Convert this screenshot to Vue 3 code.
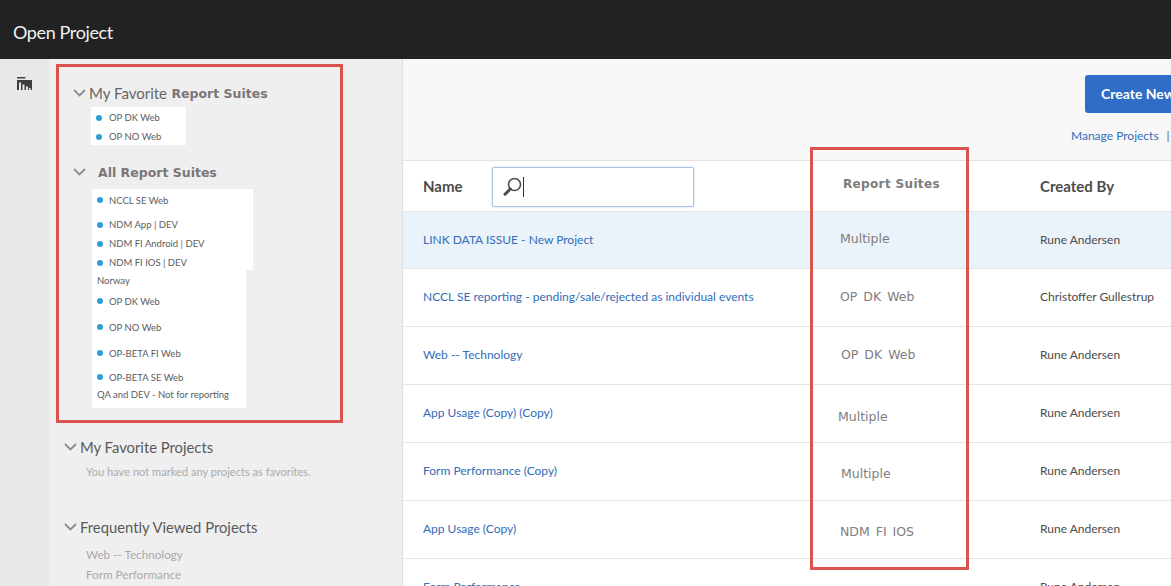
<script setup>
const favorites = ['OP DK Web', 'OP NO Web']
const allSuites = [
  { label: 'NCCL SE Web', h: 22, gap: 0, dot: true },
  { label: 'NDM App | DEV', h: 19, gap: 4, dot: true },
  { label: 'NDM FI Android | DEV', h: 19, gap: 0, dot: true },
  { label: 'NDM FI IOS | DEV', h: 19, gap: 0, dot: true },
  { label: 'Norway', h: 16, gap: 0, dot: false },
  { label: 'OP DK Web', h: 26, gap: 0, dot: true },
  { label: 'OP NO Web', h: 26, gap: 0, dot: true },
  { label: 'OP-BETA FI Web', h: 26, gap: 0, dot: true },
  { label: 'OP-BETA SE Web', h: 22, gap: 0, dot: true },
  { label: 'QA and DEV - Not for reporting', h: 12, gap: 0, dot: false }
]
const rows = [
  { name: 'LINK DATA ISSUE - New Project', suite: 'Multiple', by: 'Rune Andersen', dx: 0, dy: -2, active: true },
  { name: 'NCCL SE reporting - pending/sale/rejected as individual events', suite: 'OP DK Web', by: 'Christoffer Gullestrup', dx: 0, dy: -1 },
  { name: 'Web -- Technology', suite: 'OP DK Web', by: 'Rune Andersen', dx: 1, dy: -1 },
  { name: 'App Usage (Copy) (Copy)', suite: 'Multiple', by: 'Rune Andersen', dx: -2, dy: 3 },
  { name: 'Form Performance (Copy)', suite: 'Multiple', by: 'Rune Andersen', dx: 1, dy: 2 },
  { name: 'App Usage (Copy)', suite: 'NDM FI IOS', by: 'Rune Andersen', dx: 0, dy: 2 },
  { name: 'Form Performance', suite: '', by: 'Rune Andersen', dx: 0, dy: 0 }
]
</script>

<template>
  <div class="page">
    <header class="topbar">Open Project</header>
    <div class="body">
      <nav class="rail">
        <svg class="rail-icon" width="15" height="13" viewBox="0 0 15 13">
          <rect x="0" y="0" width="8.5" height="1.5" fill="#444" />
          <rect x="0" y="3" width="15" height="10" fill="#3d3d3d" />
          <rect x="2" y="5.5" width="2" height="7.5" fill="#e8e8e8" />
          <rect x="5.5" y="7.5" width="2" height="5.5" fill="#e8e8e8" />
          <rect x="9" y="9.5" width="2" height="3.5" fill="#e8e8e8" />
          <rect x="12" y="11" width="1.6" height="2" fill="#e8e8e8" />
        </svg>
      </nav>
      <aside class="side">
        <section class="suites">
          <h3 class="suite-head">
            <svg class="chev" width="13" height="8" viewBox="0 0 13 8"><path d="M1 1l5.5 5.5L12 1" fill="none" stroke="#8c8c8c" stroke-width="1.8" /></svg>
            <span class="adobe">My Favorite</span>&nbsp;<span>Report Suites</span>
          </h3>
          <ul class="patch fav">
            <li v-for="f in favorites" :key="f" class="item fav-item"><i class="dot"></i>{{ f }}</li>
          </ul>
          <h3 class="suite-head all">
            <svg class="chev" width="13" height="8" viewBox="0 0 13 8"><path d="M1 1l5.5 5.5L12 1" fill="none" stroke="#8c8c8c" stroke-width="1.8" /></svg>
            <span class="all-label">All Report Suites</span>
          </h3>
          <ul class="patch all-list">
            <li v-for="s in allSuites" :key="s.label" class="item" :style="{ height: s.h + 'px', marginTop: s.gap + 'px' }">
              <i v-if="s.dot" class="dot"></i>
              <span>{{ s.label }}</span>
            </li>
          </ul>
        </section>

        <section class="proj first">
          <h3 class="proj-head">
            <svg class="chev" width="13" height="8" viewBox="0 0 13 8"><path d="M1 1l5.5 5.5L12 1" fill="none" stroke="#8c8c8c" stroke-width="1.8" /></svg>
            My Favorite Projects
          </h3>
          <p class="empty">You have not marked any projects as favorites.</p>
        </section>
        <section class="proj second">
          <h3 class="proj-head">
            <svg class="chev" width="13" height="8" viewBox="0 0 13 8"><path d="M1 1l5.5 5.5L12 1" fill="none" stroke="#8c8c8c" stroke-width="1.8" /></svg>
            Frequently Viewed Projects
          </h3>
          <p class="recent">Web -- Technology</p>
          <p class="recent">Form Performance</p>
        </section>
      </aside>

      <main class="main">
        <div class="toolbar">
          <button class="create"><span>Create New</span></button>
          <div class="tool-links"><a>Manage Projects</a><span class="sep">|</span></div>
        </div>
        <div class="row head">
          <div class="c-name name-head">
            <strong>Name</strong>
            <div class="search">
              <svg width="20" height="19" viewBox="0 0 20 19">
                <circle cx="11.5" cy="7.5" r="6" fill="none" stroke="#4a4a4a" stroke-width="1.6" />
                <path d="M7.3 12L2 17.2" stroke="#4a4a4a" stroke-width="3" stroke-linecap="round" />
              </svg>
              <i class="caret"></i>
            </div>
          </div>
          <div class="c-suite suite-title">Report Suites</div>
          <div class="c-by by-title">Created By</div>
        </div>
        <div v-for="r in rows" :key="r.name" class="row body-row" :class="{ active: r.active }">
          <a class="c-name link">{{ r.name }}</a>
          <div class="c-suite">
            <span class="suite-val" :style="{ transform: `translate(${r.dx}px, ${r.dy}px)` }">{{ r.suite }}</span>
          </div>
          <div class="c-by">{{ r.by }}</div>
        </div>
      </main>
    </div>
    <div class="mark mark-left"></div>
    <div class="mark mark-right"></div>
  </div>
</template>

<style scoped>
* { box-sizing: border-box; }
.page {
  position: relative;
  width: 1171px;
  height: 586px;
  overflow: hidden;
  font-family: "Lato", "Noto Sans", sans-serif;
  color: #4b4b4b;
  background: #fff;
}
.topbar {
  height: 59px;
  background: #222;
  color: #f0f0f0;
  font-size: 18px;
  padding-left: 13px;
  line-height: 64px;
  letter-spacing: -0.38px;
}
.body { display: flex; height: 527px; }
.rail { width: 49px; flex: none; background: #e8e8e8; padding: 18px 0 0 17px; }
.rail-icon { display: block; }
.side {
  width: 353px;
  flex: none;
  background: #efefef;
  padding: 25px 0 0 24px;
  overflow: hidden;
}
.suite-head {
  margin: 0;
  height: 18px;
  display: flex;
  align-items: center;
  font-size: 12.5px;
  font-weight: 700;
  color: #7a7678;
  font-family: "DejaVu Sans", sans-serif;
  white-space: nowrap;
}
.adobe { font-family: "Lato", sans-serif; font-size: 15px; font-weight: 400; color: #666; }
.chev { flex: none; margin-right: 3px; }
.all { margin-top: 18px; }
.all-label { margin-left: 9px; }
.patch { list-style: none; margin: 0; padding: 0; background: #fff; }
.fav { width: 95px; height: 38px; margin: 5px 0 0 18px; padding-top: 1px; }
.fav-item { height: 19px; }
.fav-item .dot { margin-right: 7px; }
.all-list {
  width: 154px;
  margin: 8px 0 0 19px;
  position: relative;
  padding-bottom: 8px;
}
.all-list::before {
  content: "";
  position: absolute;
  left: 154px;
  top: 0;
  width: 7px;
  height: 81px;
  background: #fff;
}
.item {
  display: flex;
  align-items: center;
  padding-left: 5px;
  font-size: 9.5px;
  color: #5c5c5c;
  white-space: nowrap;
}
.dot {
  width: 6px;
  height: 6px;
  border-radius: 50%;
  background: #2a9fd8;
  margin-right: 6px;
  flex: none;
}
.proj-head {
  margin: 0;
  font-size: 14.8px;
  font-weight: 400;
  color: #5a5a5a;
  display: flex;
  align-items: center;
  height: 18px;
  white-space: nowrap;
}
.proj { margin-left: -9px; }
.first { margin-top: 30px; height: 80px; }
.empty { margin: 9px 0 0 22px; font-size: 11.1px; color: #ababab; white-space: nowrap; }
.recent { margin: 0 0 0 22px; font-size: 11.7px; line-height: 20px; color: #a9a9a9; white-space: nowrap; }
.second .proj-head { margin-bottom: 8px; }
.main { flex: 1; min-width: 0; background: #fff; border-left: 1px solid #dfdfdf; }
.toolbar {
  height: 102px;
  width: 768px;
  background: #f8f8f9;
  border-bottom: 1px solid #e2e2e2;
  display: flex;
  flex-direction: column;
  align-items: flex-start;
  padding: 16px 0 0 668px;
  overflow: hidden;
}
.create {
  width: 150px;
  flex: none;
  height: 38px;
  margin-left: 14px;
  border: 0;
  border-radius: 3px;
  background: #2f6dc6;
  color: #fff;
  font: 700 14px "Lato", sans-serif;
  text-align: left;
  padding: 0 0 2px 16px;
}
.tool-links { margin-top: 15px; white-space: nowrap; font-size: 12px; color: #326db8; display: flex; }
.sep { margin-left: 8px; color: #555; }
.row {
  display: grid;
  grid-template-columns: 437px 200px 300px;
  height: 58px;
  align-items: center;
  border-bottom: 1px solid #e4e4e4;
  font-size: 12px;
  width: 940px;
}
.row.head { height: 51px; border-bottom: 1px solid #dfe5ea; }
.row.active { background: #ebf3fa; height: 57px; }
.body-row .c-name, .body-row .c-by { padding-bottom: 2px; }
.c-name { padding-left: 20px; }
.name-head { display: flex; align-items: center; gap: 29px; }
.name-head strong { font-size: 15px; color: #4a4a4a; }
.search {
  width: 202px;
  height: 40px;
  margin-top: 1px;
  display: flex;
  align-items: center;
  padding-left: 10px;
  background: #fff;
  border: 1px solid #a9c6e6;
  border-radius: 2px;
  box-shadow: 0 0 2px rgba(120, 165, 215, .5);
}
.caret { width: 1px; height: 20px; background: #333; }
.link { color: #326db8; white-space: nowrap; }
.c-suite { display: flex; }
.suite-title {
  font: 700 12px "DejaVu Sans", sans-serif;
  color: #7c7c7c;
  padding-left: 3px;
  margin-top: -5px;
  letter-spacing: .35px;
}
.by-title { font-size: 15px; font-weight: 700; color: #4a4a4a; }
.suite-val { font: 12.5px "DejaVu Sans", sans-serif; color: #817c80; word-spacing: 2px; white-space: nowrap; }
.c-by { color: #4b4b4b; white-space: nowrap; }
.mark { position: absolute; border: 3px solid #d9534f; pointer-events: none; }
.mark-left { left: 56px; top: 64px; width: 287px; height: 359px; }
.mark-right { left: 810px; top: 147px; width: 159px; height: 423px; }
</style>
